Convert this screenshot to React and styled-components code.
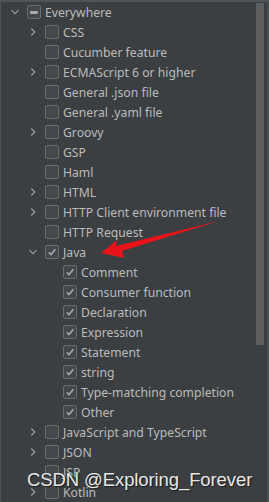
import styled, { createGlobalStyle } from "styled-components";

const GlobalStyle = createGlobalStyle`
  html, body {
    margin: 0;
    padding: 0;
    background: #3c3f41;
  }
`;

const Panel = styled.div`
  position: relative;
  width: 269px;
  height: 502px;
  box-sizing: border-box;
  overflow: hidden;
  background: #3c3f41;
  border-top: 2px solid #515355;
  border-left: 1px solid #515355;
  border-right: 2px solid #4a4c4e;
  display: flex;
  font-family: "Noto Sans", "Open Sans", sans-serif;
`;

const Tree = styled.div`
  flex: 1;
  display: flex;
  flex-direction: column;
`;

const Row = styled.div`
  height: 20px;
  display: flex;
  align-items: center;
  padding-left: ${(p) => p.$level * 18 + 6}px;
  flex-shrink: 0;
`;

const Toggle = styled.span`
  width: 16px;
  height: 16px;
  display: flex;
  align-items: center;
  justify-content: center;
  color: #9a9c9e;
`;

const Box = styled.span`
  width: 14px;
  height: 14px;
  box-sizing: border-box;
  margin-left: 4px;
  border: 1px solid #6a6c6e;
  border-radius: 2px;
  background: #43494a;
  display: flex;
  align-items: center;
  justify-content: center;
`;

const Label = styled.span`
  margin-left: 4px;
  font-size: 12.2px;
  color: #bbbbbb;
  white-space: nowrap;
`;

const Scrollbar = styled.div`
  width: 11px;
  padding-top: 1px;
  display: flex;
  justify-content: flex-start;
`;

const Thumb = styled.div`
  width: 8px;
  height: 342px;
  background: #5b5d5f;
`;

const Arrow = styled.svg`
  position: absolute;
  left: 0;
  top: 0;
  pointer-events: none;
`;

const Watermark = styled.div`
  position: absolute;
  left: 26px;
  top: 467px;
  font-family: "Liberation Sans", Arial, sans-serif;
  font-size: 18.5px;
  letter-spacing: -0.1px;
  color: #e8e8e8;
  text-shadow: 1px 1px 1px #1a1a1a;
  white-space: nowrap;
  pointer-events: none;
`;

const Chevron = ({ open }) => (
  <svg width="10" height="10" viewBox="0 0 10 10">
    {open ? (
      <path d="M1.5 3.2 L5 6.7 L8.5 3.2" fill="none" stroke="currentColor" strokeWidth="1.2" />
    ) : (
      <path d="M3.3 1.5 L6.8 5 L3.3 8.5" fill="none" stroke="currentColor" strokeWidth="1.2" />
    )}
  </svg>
);

const Mark = ({ state }) => {
  if (state === "partial")
    return <span style={{ width: 8, height: 3, background: "#a9abad", borderRadius: 1 }} />;
  if (state === "checked")
    return (
      <svg width="10" height="10" viewBox="0 0 10 10">
        <path d="M1.8 5.2 L4 7.5 L8.4 2.2" fill="none" stroke="#a9abad" strokeWidth="1.5" />
      </svg>
    );
  return null;
};

const items = [
  { level: 0, label: "Everywhere", toggle: "open", state: "partial" },
  { level: 1, label: "CSS", toggle: "closed" },
  { level: 1, label: "Cucumber feature" },
  { level: 1, label: "ECMAScript 6 or higher", toggle: "closed" },
  { level: 1, label: "General .json file" },
  { level: 1, label: "General .yaml file" },
  { level: 1, label: "Groovy", toggle: "closed" },
  { level: 1, label: "GSP" },
  { level: 1, label: "Haml" },
  { level: 1, label: "HTML", toggle: "closed" },
  { level: 1, label: "HTTP Client environment file", toggle: "closed" },
  { level: 1, label: "HTTP Request" },
  { level: 1, label: "Java", toggle: "open", state: "checked" },
  { level: 2, label: "Comment", state: "checked" },
  { level: 2, label: "Consumer function", state: "checked" },
  { level: 2, label: "Declaration", state: "checked" },
  { level: 2, label: "Expression", state: "checked" },
  { level: 2, label: "Statement", state: "checked" },
  { level: 2, label: "string", state: "checked" },
  { level: 2, label: "Type-matching completion", state: "checked" },
  { level: 2, label: "Other", state: "checked" },
  { level: 1, label: "JavaScript and TypeScript", toggle: "closed" },
  { level: 1, label: "JSON", toggle: "closed" },
  { level: 1, label: "JSP" },
  { level: 1, label: "Kotlin", toggle: "closed" },
];

export default function App() {
  return (
    <>
      <GlobalStyle />
      <Panel>
        <Tree>
          {items.map((it) => (
            <Row key={it.label} $level={it.level}>
              <Toggle>{it.toggle && <Chevron open={it.toggle === "open"} />}</Toggle>
              <Box>
                <Mark state={it.state} />
              </Box>
              <Label>{it.label}</Label>
            </Row>
          ))}
        </Tree>
        <Scrollbar>
          <Thumb />
        </Scrollbar>
        <Arrow width="269" height="502" viewBox="0 0 269 502">
          <path
            d="M100 251 L116 238 L115 244 L218 219 L121 249 L123 256 Z"
            fill="#e8131b"
          />
        </Arrow>
        <Watermark>CSDN @Exploring_Forever</Watermark>
      </Panel>
    </>
  );
}
